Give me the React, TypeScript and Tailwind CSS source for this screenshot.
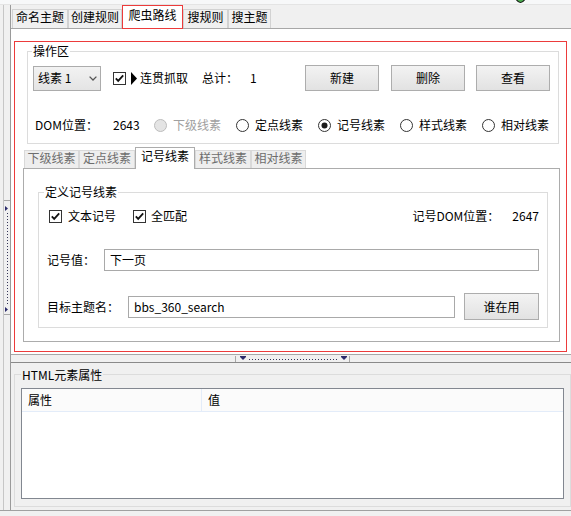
import React from "react";

type Kids = { children?: React.ReactNode; className?: string };

const Check = () => (
  <svg width="13" height="13" viewBox="0 0 13 13" className="shrink-0">
    <rect x="0.5" y="0.5" width="12" height="12" fill="#fff" stroke="#333" />
    <path d="M2.8 6.3 L5.2 8.9 L10.2 3.3" fill="none" stroke="#111" strokeWidth="1.8" />
  </svg>
);

const Radio = ({ on = false, off = false }: { on?: boolean; off?: boolean }) => (
  <svg width="13" height="13" viewBox="0 0 13 13" className="shrink-0">
    <circle cx="6.5" cy="6.5" r="6" fill={off ? "#e4e4e4" : "#fff"} stroke={off ? "#bcbcbc" : "#333"} />
    {on && <circle cx="6.5" cy="6.5" r="3" fill="#1a1a1a" />}
  </svg>
);

const Btn = ({ children, className = "" }: Kids) => (
  <div
    className={`flex items-center justify-center border border-[#adadad] bg-linear-to-b from-[#f3f3f3] to-[#e2e2e2] ${className}`}
  >
    {children}
  </div>
);

const Group = ({
  label,
  labelClass,
  className = "",
  children,
}: Kids & { label: string; labelClass: string }) => (
  <div className={`relative border border-[#dcdcdc] ${className}`}>
    <span className={`absolute px-[1px] ${labelClass}`}>{label}</span>
    {children}
  </div>
);

// outer (page level) tabs
const OuterTab = ({ children, className = "" }: Kids) => (
  <div
    className={`h-[19px] flex items-start justify-center leading-[14px] border border-b-0 border-[#d2d2d2] bg-[#f0f0f0] ${className}`}
  >
    {children}
  </div>
);

// inner tabs of the 操作区 panel
const InnerTab = ({ children, className = "" }: Kids) => (
  <div
    className={`h-[18px] flex items-start justify-center leading-[14px] text-[#6d6d6d] border border-b-0 border-[#d9d9d9] bg-[#eeeeee] ${className}`}
  >
    {children}
  </div>
);

const Opt = ({ label, on, off }: { label: string; on?: boolean; off?: boolean }) => (
  <div className="w-[82px] shrink-0 flex items-center gap-[6px]">
    <Radio on={on} off={off} />
    <span className={off ? "text-[#a0a0a0]" : ""}>{label}</span>
  </div>
);

const dotsV = Array.from({ length: 31 }, (_, i) => 13 + i * 3);
const dotsH = Array.from({ length: 30 }, (_, i) => 14 + i * 3);

export default function App() {
  return (
    <div className="w-[571px] h-[516px] overflow-hidden flex flex-col bg-[#f0f0f0] text-[12px] leading-[16px] text-black font-['Noto_Sans_CJK_SC','Microsoft_YaHei',sans-serif]">
      <div className="relative h-[5px] shrink-0 bg-[#f7f8f9] border-b border-[#e4e4e4]">
        <svg className="absolute left-[515px] top-0" width="11" height="4" viewBox="0 0 11 4">
          <path d="M1.5 0 Q5.5 5 9.5 0" fill="#4caf50" stroke="#111" strokeWidth="1.2" />
        </svg>
      </div>

      <div className="flex flex-1 min-h-0">
        {/* left splitter */}
        <div className="w-[11px] shrink-0 flex">
          <div className="w-[3px]" />
          <div className="w-[7px] border-l border-[#c6c6c6] pt-[195px]">
            <svg width="6" height="115" viewBox="0 0 6 115">
              <line x1="0" y1="0.5" x2="6" y2="0.5" stroke="#a8a8a8" />
              <polygon points="1,6 4,8.5 1,11" fill="#2b2b6b" />
              {dotsV.map((y) => (
                <rect key={y} x="3" y={y} width="1" height="1" fill="#333355" />
              ))}
              <polygon points="1,107 4,109.5 1,112" fill="#2b2b6b" />
              <line x1="0" y1="114.5" x2="6" y2="114.5" stroke="#a8a8a8" />
            </svg>
          </div>
          <div className="w-[1px] bg-[#9a9a9a]" />
        </div>

        <div className="flex-1 min-w-0 flex flex-col">
          {/* outer tab strip */}
          <div className="h-[23px] shrink-0 flex items-end pl-[1px]">
            <OuterTab className="w-[56px]">命名主题</OuterTab>
            <OuterTab className="w-[54px]">创建规则</OuterTab>
            <div className="relative z-10 -mb-px h-[24px] w-[61px] flex items-start justify-center pt-[2px] leading-[14px] border border-[#ec3b3b] bg-white">
              爬虫路线
            </div>
            <OuterTab className="w-[45px]">搜规则</OuterTab>
            <OuterTab className="w-[43px]">搜主题</OuterTab>
          </div>

          {/* outer tab page */}
          <div className="shrink-0 bg-white border-t border-b border-[#a7a7a7] pt-[12px] pb-[2px] pl-[3px] pr-[4px]">
            <div className="h-[311px] border border-[#ec3b3b] pl-[8px] pt-[9px] flex flex-col">
              <Group
                label="操作区"
                labelClass="left-[4px] -top-[9px] bg-white"
                className="ml-[4px] w-[532px] h-[93px] shrink-0 pt-[13px] pl-[5px] pr-[8px]"
              >
                <div className="h-[26px] flex items-center">
                  <div className="w-[68px] h-[25px] shrink-0 flex items-center justify-between pl-[4px] pr-[3px] border border-[#acacac] bg-linear-to-b from-[#f2f2f2] to-[#e4e4e4]">
                    <span>线素 1</span>
                    <svg width="8" height="5" viewBox="0 0 8 5">
                      <path d="M0.6 0.6 L4 4 L7.4 0.6" fill="none" stroke="#555" strokeWidth="1.3" />
                    </svg>
                  </div>
                  <div className="ml-[12px]">
                    <Check />
                  </div>
                  <svg className="ml-[5px] shrink-0" width="6" height="13" viewBox="0 0 6 13">
                    <polygon points="0,0 6,6.5 0,13" fill="#000" />
                  </svg>
                  <span className="ml-[3px]">连贯抓取</span>
                  <span className="ml-[14px]">总计：</span>
                  <span className="ml-[12px]">1</span>
                  <Btn className="ml-auto w-[74px] h-[26px]">新建</Btn>
                  <Btn className="ml-[12px] w-[74px] h-[26px]">删除</Btn>
                  <Btn className="ml-[11px] w-[74px] h-[26px]">查看</Btn>
                </div>
                <div className="mt-[26px] h-[16px] flex items-center pl-[2px]">
                  <span className="w-[78px] shrink-0">DOM位置：</span>
                  <span className="w-[41px] shrink-0">2643</span>
                  <Opt label="下级线素" off />
                  <Opt label="定点线素" />
                  <Opt label="记号线素" on />
                  <Opt label="样式线素" />
                  <Opt label="相对线素" />
                </div>
              </Group>

              {/* inner tab control */}
              <div className="mt-[3px] h-[21px] shrink-0 flex items-end pl-[1px]">
                <InnerTab className="w-[55px]">下级线素</InnerTab>
                <InnerTab className="w-[56px]">定点线素</InnerTab>
                <div className="relative z-10 -mb-px h-[22px] w-[60px] flex items-start justify-center pt-[1px] leading-[14px] border border-b-0 border-[#acacac] bg-white">
                  记号线素
                </div>
                <InnerTab className="w-[56px]">样式线素</InnerTab>
                <InnerTab className="w-[55px]">相对线素</InnerTab>
              </div>
              <div className="w-[537px] h-[174px] shrink-0 border border-[#acacac] bg-white pl-[14px] pt-[23px]">
                <Group
                  label="定义记号线素"
                  labelClass="left-[5px] -top-[9px] bg-white"
                  className="w-[510px] h-[136px] pt-[15px] pl-[8px] pr-[8px]"
                >
                  <div className="h-[16px] flex items-center pl-[2px]">
                    <Check />
                    <span className="ml-[6px]">文本记号</span>
                    <div className="ml-[17px]">
                      <Check />
                    </div>
                    <span className="ml-[5px]">全匹配</span>
                    <span className="ml-auto">记号DOM位置：</span>
                    <span className="ml-[13px]">2647</span>
                  </div>
                  <div className="mt-[25px] h-[22px] flex items-center">
                    <span className="w-[57px] shrink-0">记号值：</span>
                    <div className="w-[436px] h-[22px] flex items-center pl-[5px] border border-[#a9a9a9] bg-white">
                      下一页
                    </div>
                  </div>
                  <div className="mt-[22px] h-[27px] flex items-center">
                    <span className="w-[81px] shrink-0">目标主题名：</span>
                    <div className="w-[327px] h-[22px] flex items-center pl-[5px] border border-[#a9a9a9] bg-white">
                      bbs_360_search
                    </div>
                    <Btn className="ml-[9px] w-[75px] h-[27px]">谁在用</Btn>
                  </div>
                </Group>
              </div>
            </div>
          </div>

          {/* horizontal splitter */}
          <div className="h-[7px] shrink-0 pl-[224px]">
            <svg width="115" height="7" viewBox="0 0 115 7">
              <line x1="0.5" y1="1" x2="0.5" y2="7" stroke="#a8a8a8" />
              <rect x="5" y="1" width="6" height="1" fill="#2b2b6b" />
              <polygon points="5,2 11,2 8,5" fill="#2b2b6b" />
              {dotsH.map((x) => (
                <rect key={x} x={x} y="4" width="1" height="1" fill="#333355" />
              ))}
              <rect x="106" y="1" width="6" height="1" fill="#2b2b6b" />
              <polygon points="106,2 112,2 109,5" fill="#2b2b6b" />
              <line x1="114.5" y1="1" x2="114.5" y2="7" stroke="#a8a8a8" />
            </svg>
          </div>

          {/* lower pane */}
          <div className="flex-1 min-h-0 border-t border-[#8a8a8a] pl-[3px] pt-[11px]">
            <Group
              label="HTML元素属性"
              labelClass="left-[6px] -top-[8px] bg-[#f0f0f0]"
              className="w-[557px] h-[133px] pl-[6px] pt-[13px]"
            >
              <div className="w-[543px] h-[111px] border border-[#828790] bg-white">
                <div className="h-[23px] flex bg-[#fbfbfb] border-b border-[#e3ecf9]">
                  <div className="w-[180px] flex items-center pl-[6px] border-r border-[#e3ecf9]">属性</div>
                  <div className="flex items-center pl-[6px]">值</div>
                </div>
              </div>
            </Group>
          </div>
        </div>
      </div>

      <div className="h-[6px] shrink-0 border-t border-[#a0a0a0]" />
    </div>
  );
}
